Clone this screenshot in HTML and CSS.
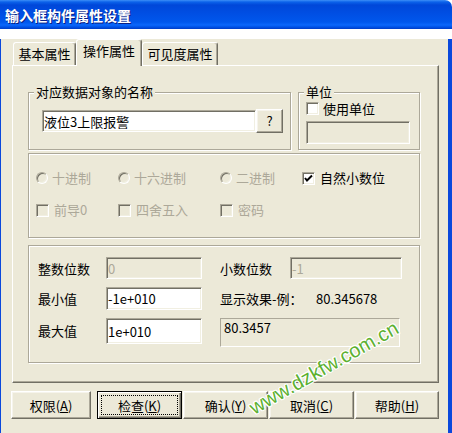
FILE: index.html
```html
<!DOCTYPE html>
<html lang="zh-CN">
<head>
  <meta charset="UTF-8">
  <title>输入框构件属性设置</title>
  <link rel="stylesheet" href="styles.css">
</head>
<body>
  <div class="window">
    <div class="titlebar">
      <span class="title">输入框构件属性设置</span>
    </div>

    <div class="frame">
      <div class="tabs">
        <div class="tab tab-basic">基本属性</div>
        <div class="tab tab-active">操作属性</div>
        <div class="tab tab-visible">可见度属性</div>
      </div>

      <div class="panel">
        <div class="row-top">
          <div class="group group-name">
            <div class="group-title">对应数据对象的名称</div>
            <div class="name-body">
              <input class="field field-name" type="text" value="液位3上限报警">
              <button class="btn btn-small">?</button>
            </div>
          </div>

          <div class="group group-unit">
            <div class="group-title">单位</div>
            <label class="check-item unit-check"><span class="checkbox"></span>使用单位</label>
            <input class="field field-unit" type="text" value="" disabled>
          </div>
        </div>

        <div class="group group-format">
          <label class="check-item is-disabled"><span class="radio"></span>十进制</label>
          <label class="check-item is-disabled"><span class="radio"></span>十六进制</label>
          <label class="check-item is-disabled"><span class="radio"></span>二进制</label>
          <label class="check-item check-wide">
            <span class="checkbox">
              <svg width="11" height="11" viewBox="0 0 11 11"><polyline points="2,5 4,7.5 9,2.5" fill="none" stroke="#000" stroke-width="2"/></svg>
            </span>自然小数位
          </label>
          <label class="check-item check-wide is-disabled"><span class="checkbox"></span>前导0</label>
          <label class="check-item check-wide is-disabled"><span class="checkbox"></span>四舍五入</label>
          <label class="check-item check-wide is-disabled"><span class="checkbox"></span>密码</label>
        </div>

        <div class="group group-range">
          <span class="range-label">整数位数</span>
          <input class="field" type="text" value="0" disabled>
          <span></span>
          <span class="range-label">小数位数</span>
          <input class="field" type="text" value="-1" disabled>

          <span class="range-label">最小值</span>
          <input class="field" type="text" value="-1e+010">
          <span></span>
          <div class="preview">
            <span class="preview-label">显示效果-例：</span>
            <span class="preview-value">80.345678</span>
          </div>

          <span class="range-label label-top">最大值</span>
          <input class="field field-max" type="text" value="1e+010">
          <span></span>
          <div class="output">80.3457</div>
        </div>
      </div>

      <div class="buttons">
        <button class="btn btn-auth">权限(<u>A</u>)</button>
        <button class="btn btn-default">检查(<u>K</u>)</button>
        <button class="btn">确认(<u>Y</u>)</button>
        <button class="btn">取消(<u>C</u>)</button>
        <button class="btn btn-help">帮助(<u>H</u>)</button>
      </div>
    </div>

    <span class="watermark">www.dzkfw.com.cn</span>
  </div>
</body>
</html>
```

FILE: styles.css
```css
* {
  margin: 0;
  padding: 0;
  box-sizing: border-box;
}

body {
  width: 452px;
  height: 433px;
  overflow: hidden;
  background: #ffffff;
  font-family: "Noto Sans CJK SC", "Liberation Sans", sans-serif;
  font-size: 13px;
  color: #000;
}

.window {
  position: relative;
  width: 452px;
  height: 432px;
}

.titlebar {
  height: 29px;
  display: flex;
  align-items: center;
  padding-left: 5px;
  border-top-right-radius: 7px;
  background: linear-gradient(#3d8ff7 0, #0b62ea 2px, #0047d9 5px, #004fe4 14px, #0057ec 22px, #0b67fb 25px, #0052e6 27px, #003cc6 29px);
}

.title {
  color: #fff;
  font-size: 14px;
  font-weight: 700;
  line-height: 16px;
  text-shadow: 1px 1px 0 #0a1f84;
}

.frame {
  height: 403px;
  background: #ece9d8;
  border-style: solid;
  border-color: #0a48dc;
  border-width: 0 4px 4px 1px;
}

/* tabs */

.tabs {
  display: flex;
  align-items: flex-end;
  height: 26px;
  margin: 10px 0 0 12px;
}

.tab {
  height: 23px;
  line-height: 21px;
  text-align: center;
  background: #ece9d8;
  border: 1px solid #fff;
  border-right-color: #716f64;
  border-bottom: none;
  border-radius: 3px 3px 0 0;
  box-shadow: inset -1px 0 0 #aca899;
}

.tab-basic {
  width: 63px;
}

.tab-active {
  position: relative;
  z-index: 1;
  width: 66px;
  height: 27px;
  line-height: 22px;
  margin-bottom: -1px;
}

.tab-visible {
  width: 76px;
}

.panel {
  width: 427px;
  height: 318px;
  margin-left: 11px;
  padding: 26px 18px 0 15px;
  border: 1px solid;
  border-color: #fff #716f64 #716f64 #fff;
  box-shadow: inset -1px -1px 0 #aca899;
}

/* group boxes */

.row-top {
  display: flex;
  gap: 7px;
}

.group {
  border: 1px solid #aca899;
  box-shadow: inset 1px 1px 0 #fff, 1px 1px 0 #fff;
}

.group-title {
  width: fit-content;
  margin: -8px 0 0 5px;
  padding: 0 2px;
  line-height: 14px;
  background: #ece9d8;
}

.group-name {
  width: 263px;
  height: 58px;
}

.name-body {
  display: flex;
  align-items: center;
  margin: 10px 0 0 13px;
}

.group-unit {
  width: 122px;
  height: 58px;
}

.unit-check {
  height: 13px;
  margin: 3px 0 0 7px;
}

.field {
  display: block;
  height: 22px;
  padding: 0 1px;
  font: inherit;
  color: #000;
  background: #fff;
  border: 1px solid;
  border-color: #aca899 #fff #fff #aca899;
  box-shadow: inset 1px 1px 0 #716f64, inset -1px -1px 0 #f1efe2;
  outline: none;
}

.field:disabled {
  color: #aca899;
  background: #ece9d8;
}

.field-name {
  width: 214px;
}

.field-unit {
  width: 104px;
  height: 23px;
  margin: 6px 0 0 7px;
}

.group-format {
  width: 392px;
  height: 85px;
  margin-top: 3px;
  padding: 16px 0 0 7px;
  display: grid;
  grid-template-columns: 82px 102px 82px 1fr;
  grid-template-rows: 16px 16px;
  row-gap: 16px;
}

.check-item {
  display: flex;
  align-items: center;
  gap: 4px;
  line-height: 14px;
  white-space: nowrap;
}

.check-wide {
  gap: 5px;
}

.check-item.is-disabled {
  color: #aca899;
}

.radio {
  width: 12px;
  height: 12px;
  border-radius: 50%;
  border: 1px solid;
  border-color: #aca899 #fff #fff #aca899;
  box-shadow: inset 1px 1px 0 #716f64, inset -1px -1px 0 #f1efe2;
  background: #ece9d8;
}

.checkbox {
  display: flex;
  align-items: center;
  justify-content: center;
  flex: none;
  width: 13px;
  height: 13px;
  border: 1px solid;
  border-color: #aca899 #fff #fff #aca899;
  box-shadow: inset 1px 1px 0 #716f64, inset -1px -1px 0 #f1efe2;
  background: #fff;
}

.is-disabled .checkbox {
  background: #ece9d8;
}

.group-range {
  width: 392px;
  height: 118px;
  margin-top: 7px;
  padding: 11px 0 0 9px;
  display: grid;
  grid-template-columns: 68px 96px 18px 70px 112px;
  grid-template-rows: 22px 23px 29px;
  row-gap: 8px;
  align-items: center;
}

.range-label {
  white-space: nowrap;
}

.label-top {
  align-self: start;
  line-height: 26px;
}

.group-range .field {
  width: 100%;
  height: 100%;
}

.group-range .field-max {
  height: 26px;
  align-self: start;
}

.preview {
  grid-column: 4 / span 2;
  display: flex;
  white-space: nowrap;
}

.preview-label {
  width: 96px;
}

.output {
  grid-column: 4 / span 2;
  width: 180px;
  height: 29px;
  padding: 1px 3px;
  line-height: 16px;
  border: 1px solid;
  border-color: #aca899 #fff #fff #aca899;
}

/* buttons */

.btn {
  font: inherit;
  color: #000;
  background: #ece9d8;
  border: 1px solid;
  border-color: #fff #716f64 #716f64 #fff;
  box-shadow: inset -1px -1px 0 #aca899, inset 1px 1px 0 #f6f4ec;
  cursor: pointer;
}

.btn u {
  text-decoration: underline;
  text-underline-offset: 1px;
}

.btn-small {
  width: 27px;
  height: 24px;
  line-height: 20px;
}

.buttons {
  display: flex;
  gap: 1px;
  margin: 8px 0 0 10px;
}

.buttons .btn {
  width: 85px;
  height: 28px;
}

.buttons .btn-auth {
  width: 80px;
  margin-right: 5px;
}

.buttons .btn-help {
  width: 84px;
}

.buttons .btn-default {
  border: 1px solid #000;
  box-shadow: inset 1px 1px 0 #fff, inset -1px -1px 0 #716f64, inset -2px -2px 0 #aca899;
  outline: 1px dotted #000;
  outline-offset: -5px;
}

.watermark {
  position: absolute;
  left: 324px;
  top: 368px;
  transform: translate(-50%, -50%) rotate(-29.5deg);
  font-family: "Liberation Sans", sans-serif;
  font-size: 20px;
  color: #5cb030;
  white-space: nowrap;
  text-shadow: 1px 0 0 #fff, -1px 0 0 #fff, 0 1px 0 #fff, 0 -1px 0 #fff, 1px 1px 0 #fff, -1px -1px 0 #fff, 1px -1px 0 #fff, -1px 1px 0 #fff;
}
```
